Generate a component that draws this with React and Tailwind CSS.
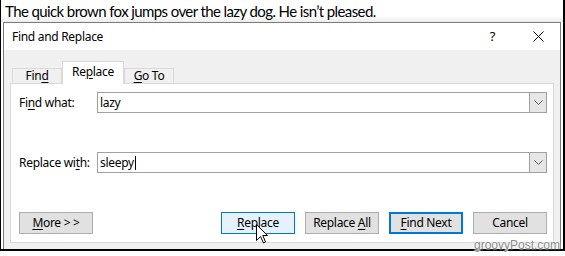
import React from "react";

const U = ({ children }) => <span className="underline underline-offset-2">{children}</span>;

function Chevron() {
  return (
    <div className="w-[17px] h-full bg-[#e6e6e6] border-l border-[#a0a0a0] flex items-center justify-center">
      <svg width="9" height="5" viewBox="0 0 9 5">
        <polyline points="0.5,0.5 4.5,4.5 8.5,0.5" fill="none" stroke="#606060" strokeWidth="1" />
      </svg>
    </div>
  );
}

function Field({ label, value, caret }) {
  return (
    <div className="flex items-center h-[21px]">
      <div className="w-[78px] shrink-0">{label}</div>
      <div className="flex-1 h-[21px] border border-[#a0a0a0] bg-white flex items-stretch">
        <div className="flex-1 flex items-center pl-[2px]">
          <span>{value}</span>
          {caret && <span className="w-px h-[14px] bg-black ml-px" />}
        </div>
        <Chevron />
      </div>
    </div>
  );
}

function Btn({ children, variant }) {
  const cls =
    variant === "hover"
      ? "bg-[#e5f1fb] border border-[#0078d7]"
      : variant === "default"
      ? "bg-[#e1e1e1] border-2 border-[#0078d7]"
      : "bg-[#e1e1e1] border border-[#adadad]";
  return (
    <div className={`w-[74px] h-[22px] flex items-center justify-center ${cls}`}>{children}</div>
  );
}

export default function App() {
  return (
    <div className="w-[565px] h-[256px] bg-white relative overflow-hidden">
      <div className="w-[565px] h-[251px] border-l border-r-2 border-b-2 border-black flex flex-col">
        <div
          className="h-[22px] pl-[4px] flex items-center text-[15px] tracking-[-0.6px] text-black bg-gradient-to-b from-white from-70% to-[#ececec]"
          style={{ fontFamily: "Lato, 'Liberation Sans', sans-serif" }}
        >
          The quick brown fox jumps over the lazy dog. He isn’t pleased.
        </div>
        <div
          className="mx-[2px] flex-1 border-t border-l border-r border-[#7a7a7a] flex flex-col text-[12px] tracking-[-0.3px] text-black"
          style={{ fontFamily: "'Noto Sans', 'Open Sans', sans-serif" }}
        >
          <div className="h-[27px] bg-white flex items-center pl-[8px]">
            <span className="flex-1">Find and Replace</span>
            <span className="text-[13px] mr-[38px]">?</span>
            <svg width="11" height="11" viewBox="0 0 11 11" className="mr-[16px]">
              <path d="M0.5 0.5 L10.5 10.5 M10.5 0.5 L0.5 10.5" stroke="#000" strokeWidth="1" />
            </svg>
          </div>
          <div className="flex-1 bg-[#f0f0f0] px-[6px] pt-[11px]">
            <div className="flex items-end h-[23px] pl-[2px] -mb-px relative z-10">
              <div className="w-[50px] h-[15px] mb-px border border-b-0 border-[#d9d9d9] flex items-center justify-center">
                <span>Fin<U>d</U></span>
              </div>
              <div className="w-[62px] h-[23px] bg-white border border-b-0 border-[#d9d9d9] flex items-center justify-center pb-[2px]">
                <span>Re<U>p</U>lace</span>
              </div>
              <div className="w-[50px] h-[15px] mb-px border border-b-0 border-[#d9d9d9] flex items-center justify-center">
                <span><U>G</U>o To</span>
              </div>
            </div>
            <div className="h-[160px] bg-white border border-[#d9d9d9] pt-[8px] pl-[8px] pr-[6px] flex flex-col">
              <Field label={<span>Fi<U>n</U>d what:</span>} value="lazy" />
              <div className="h-[39px]" />
              <Field label={<span>Replace wi<U>t</U>h:</span>} value="sleepy" caret />
              <div className="h-[39px]" />
              <div className="flex items-center">
                <Btn><span><U>M</U>ore &gt; &gt;</span></Btn>
                <div className="flex-1" />
                <div className="flex gap-[10px]">
                  <Btn variant="hover"><span><U>R</U>eplace</span></Btn>
                  <Btn><span>Replace <U>A</U>ll</span></Btn>
                  <Btn variant="default"><span><U>F</U>ind Next</span></Btn>
                  <Btn>Cancel</Btn>
                </div>
              </div>
            </div>
          </div>
        </div>
      </div>
      <svg className="absolute left-[256px] top-[224px]" width="13" height="20" viewBox="0 0 13 20">
        <path d="M0.5 0.5 L0.5 16.5 L4.5 12.5 L7.5 19 L9.5 18 L6.8 11.5 L11.5 11.5 Z" fill="#fff" stroke="#000" strokeWidth="1" strokeLinejoin="round" />
      </svg>
      <div
        className="absolute left-[474px] top-[238px] text-[12px] leading-[15px] text-[#8a8a8a] [text-shadow:0_0_1px_#fff,0_0_2px_#fff,0_0_2px_#fff]"
        style={{ fontFamily: "'Liberation Sans', sans-serif" }}
      >
        groovyPost.com
      </div>
    </div>
  );
}
